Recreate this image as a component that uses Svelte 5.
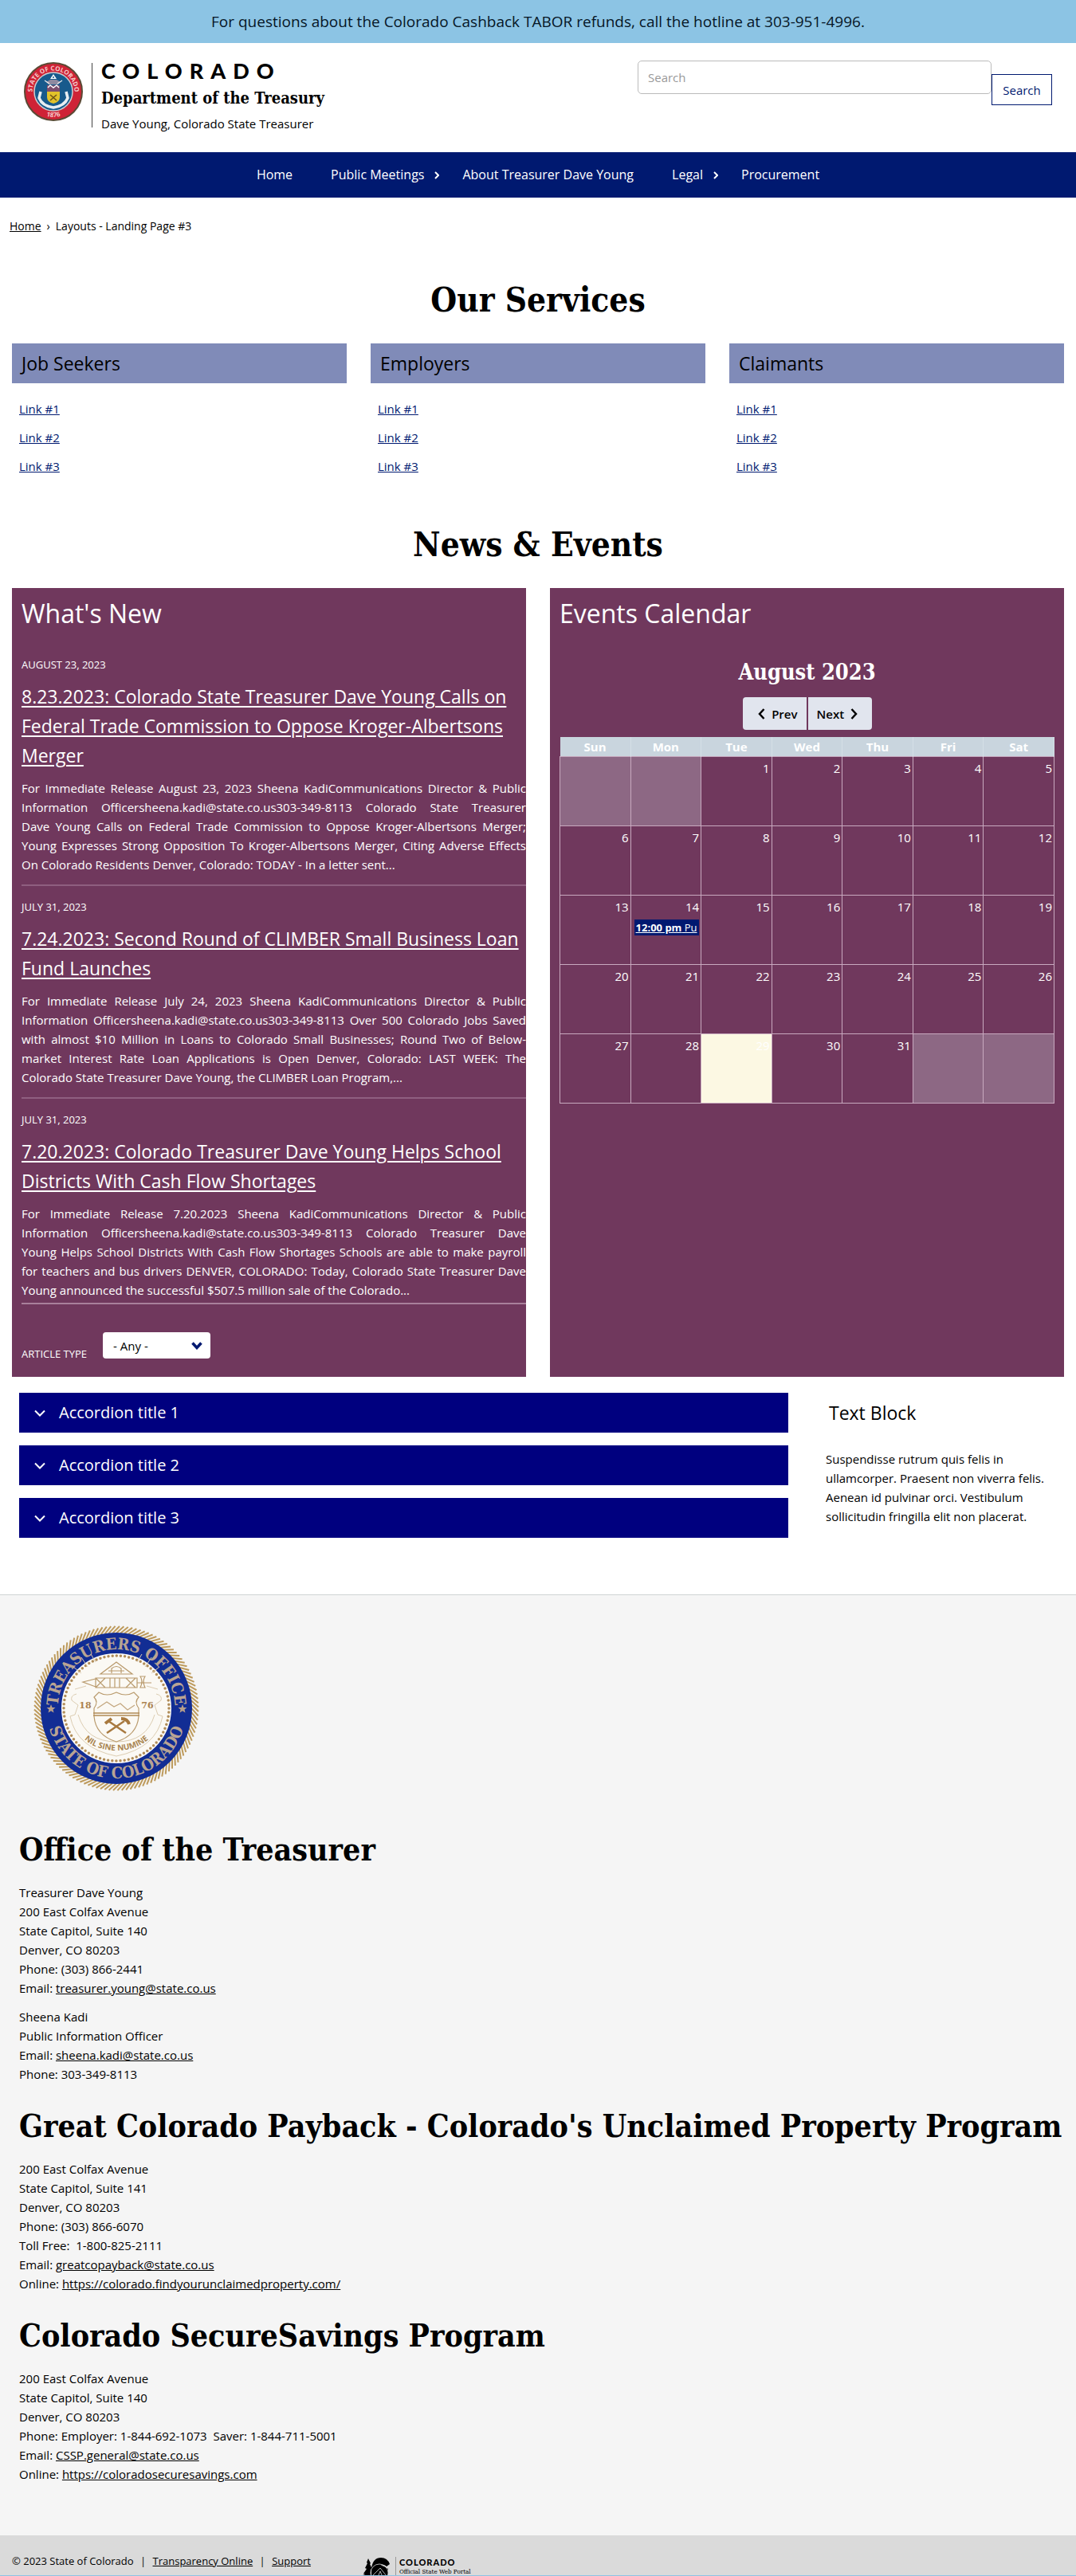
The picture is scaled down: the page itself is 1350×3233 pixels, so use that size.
<script>
  const services = ['Job Seekers', 'Employers', 'Claimants'];
  const links = ['Link #1', 'Link #2', 'Link #3'];

  const articles = [
    {
      date: 'August 23, 2023',
      title: '8.23.2023: Colorado State Treasurer Dave Young Calls on Federal Trade Commission to Oppose Kroger-Albertsons Merger',
      text: 'For Immediate Release August 23, 2023 Sheena KadiCommunications Director & Public Information Officersheena.kadi@state.co.us303-349-8113 Colorado State Treasurer Dave\u00a0Young Calls on Federal Trade Commission to Oppose Kroger-Albertsons Merger; Young Expresses Strong Opposition To Kroger-Albertsons Merger, Citing Adverse Effects On Colorado Residents Denver, Colorado: TODAY - In a letter sent...'
    },
    {
      date: 'July 31, 2023',
      title: '7.24.2023: Second Round of CLIMBER Small Business Loan Fund Launches',
      text: 'For Immediate Release July 24, 2023 Sheena KadiCommunications Director & Public Information Officersheena.kadi@state.co.us303-349-8113 Over 500 Colorado Jobs Saved with almost $10 Million in Loans to Colorado Small Businesses; Round Two of Below-market Interest Rate Loan Applications is Open Denver, Colorado: LAST WEEK: The Colorado State Treasurer Dave Young, the CLIMBER Loan Program,...'
    },
    {
      date: 'July 31, 2023',
      title: '7.20.2023: Colorado Treasurer Dave Young Helps School Districts With Cash Flow Shortages',
      text: 'For Immediate Release 7.20.2023 Sheena KadiCommunications Director & Public Information Officersheena.kadi@state.co.us303-349-8113 Colorado Treasurer Dave Young\u00a0Helps School Districts With Cash Flow Shortages Schools are able to make payroll for teachers and bus drivers DENVER, COLORADO: Today, Colorado State Treasurer Dave Young announced the successful $507.5 million sale of the Colorado...'
    }
  ];

  const days = ['Sun', 'Mon', 'Tue', 'Wed', 'Thu', 'Fri', 'Sat'];
  const firstWeekday = 2;
  const today = 29;
  const weeks = Array.from({ length: 5 }, (_, w) =>
    Array.from({ length: 7 }, (_, d) => {
      const n = w * 7 + d - firstWeekday + 1;
      return n >= 1 && n <= 31 ? n : null;
    })
  );

  const accordions = ['Accordion title 1', 'Accordion title 2', 'Accordion title 3'];
  let open = $state(-1);

  const rope = Array.from({ length: 120 }, (_, i) => i * 3);
</script>

<p class="banner">For questions about the Colorado Cashback TABOR refunds, call the hotline at 303-951-4996.</p>

<header>
  <a class="brand" href="#home">
    <svg class="state-seal" viewBox="0 0 74 74" aria-hidden="true">
      <defs>
        <path id="state-top" d="M12.1 46.1A26.5 26.5 0 1 1 61.9 46.1" />
        <path id="state-bottom" d="M5 37a32 32 0 0 0 64 0" />
      </defs>
      <circle cx="37" cy="37" r="36" fill="#cf2336" stroke="#5b4a35" stroke-width="2" />
      <circle cx="37" cy="37" r="24" fill="#175a8c" stroke="#c9cdd0" stroke-width="1.5" />
      <text class="state-text"><textPath href="#state-top" startOffset="50%" text-anchor="middle">STATE OF COLORADO</textPath></text>
      <text class="state-text"><textPath href="#state-bottom" startOffset="50%" text-anchor="middle">1876</textPath></text>
      <path d="M37 15l-4 6h8z" fill="#fff" />
      <circle cx="37" cy="19" r="1" fill="#175a8c" />
      <path d="M28 25l5-3h8l5 3-3 3H31z" fill="#8e8aa0" />
      <path d="M26 23l6 4M48 23l-6 4" stroke="#eee" stroke-width="1.2" />
      <path d="M29 29h16v8H29z" fill="#7c4e6d" />
      <path d="M30 32l3-3 4 3 4-3 3 3" fill="none" stroke="#fff" stroke-width="1.4" />
      <path d="M29 37h16v7q0 6-8 8q-8-2-8-8z" fill="#e2c22a" />
      <path d="M33 41l8 7M41 41l-8 7" stroke="#6e5418" stroke-width="1.6" />
      <path d="M21 37l-2 8q4 10 18 12q14-2 18-12l-2-8" fill="none" stroke="#e8eef2" stroke-width="3.5" />
    </svg>
    <span class="wordmark">
      <span class="colorado">COLORADO</span>
      <span class="dept">Department of the Treasury</span>
      <span class="officer">Dave Young, Colorado State Treasurer</span>
    </span>
  </a>
  <form class="search" role="search" onsubmit={(e) => e.preventDefault()}>
    <input type="search" placeholder="Search" aria-label="Search" />
    <button type="submit">Search</button>
  </form>
</header>

{#snippet chevron()}
  <svg class="nav-arrow" viewBox="0 0 6 10" aria-hidden="true"><path d="M1 1l4 4-4 4" /></svg>
{/snippet}

<nav class="main-nav" aria-label="Main">
  <a href="#home">Home</a>
  <a href="#meetings">Public Meetings{@render chevron()}</a>
  <a href="#about">About Treasurer Dave Young</a>
  <a href="#legal">Legal{@render chevron()}</a>
  <a href="#procurement">Procurement</a>
</nav>

<nav class="breadcrumb" aria-label="Breadcrumb">
  <a href="#home">Home</a><span>›</span><span>Layouts - Landing Page #3</span>
</nav>

<main>
  <h2>Our Services</h2>
  <div class="services">
    {#each services as name}
      <section>
        <h3>{name}</h3>
        <ul>
          {#each links as link}<li><a href="#link">{link}</a></li>{/each}
        </ul>
      </section>
    {/each}
  </div>

  <h2>News &amp; Events</h2>
  <div class="panels">
    <section class="panel news">
      <h3>What's New</h3>
      {#each articles as a}
        <article>
          <p class="date">{a.date}</p>
          <h4><a href="#article">{a.title}</a></h4>
          <p class="excerpt">{a.text}</p>
        </article>
      {/each}
      <div class="filter">
        <label for="article-type">Article Type</label>
        <span class="select-wrap">
          <select id="article-type"><option>- Any -</option></select>
          <svg viewBox="0 0 14 10" aria-hidden="true"><path d="M1.5 1.5L7 7.5l5.5-6" /></svg>
        </span>
      </div>
    </section>

    <section class="panel events">
      <h3>Events Calendar</h3>
      <p class="month">August 2023</p>
      <div class="pager">
        <button type="button"><svg viewBox="0 0 9 14" aria-hidden="true"><path d="M7.5 1L2 7l5.5 6" /></svg>Prev</button>
        <button type="button">Next<svg viewBox="0 0 9 14" aria-hidden="true"><path d="M1.5 1L7 7l-5.5 6" /></svg></button>
      </div>
      <table>
        <thead>
          <tr>{#each days as d}<th scope="col">{d}</th>{/each}</tr>
        </thead>
        <tbody>
          {#each weeks as week}
            <tr>
              {#each week as n}
                <td class:other={n === null} class:today={n === today}>
                  {n ?? ''}
                  {#if n === 14}<a class="event" href="#event"><b>12:00 pm</b> Pu</a>{/if}
                </td>
              {/each}
            </tr>
          {/each}
        </tbody>
      </table>
    </section>
  </div>

  <div class="lower">
    <div class="accordions">
      {#each accordions as title, i}
        <button type="button" aria-expanded={open === i} onclick={() => (open = open === i ? -1 : i)}>
          <svg viewBox="0 0 14 9" aria-hidden="true"><path d="M1 1.5l6 6 6-6" /></svg>{title}
        </button>
      {/each}
    </div>
    <section class="text-block">
      <h3>Text Block</h3>
      <p>Suspendisse rutrum quis felis in ullamcorper. Praesent non viverra felis. Aenean id pulvinar orci. Vestibulum sollicitudin fringilla elit non placerat.</p>
    </section>
  </div>
</main>

<footer>
  <svg class="office-seal" viewBox="0 0 208 208" role="img" aria-label="Treasurers Office, State of Colorado">
    <defs>
      <path id="ring-top" d="M31 110A73.3 73.3 0 1 1 177 110" />
      <path id="ring-bottom" d="M16 104a88 88 0 0 0 176 0" />
      <path id="motto" d="M55 133Q72 157 104 157T153 133" />
    </defs>
    <circle cx="104" cy="104" r="96" fill="#fbfaf6" />
    <g stroke="#bd9a5c" stroke-width="2">
      {#each rope as angle}<path d="M99 10l9-9" transform={`rotate(${angle} 104 104)`} />{/each}
    </g>
    <circle cx="104" cy="104" r="82" fill="none" stroke="#122d94" stroke-width="26" />
    <circle cx="104" cy="104" r="66" fill="#fbf9f4" stroke="#b08c58" stroke-width="3.5" stroke-dasharray="0 5.18" stroke-linecap="round" />
    <text class="ring-text"><textPath href="#ring-top" startOffset="50%" text-anchor="middle">TREASURERS OFFICE</textPath></text>
    <text class="ring-text"><textPath href="#ring-bottom" startOffset="50%" text-anchor="middle">STATE OF COLORADO</textPath></text>
    <g fill="#b79f8b">
      <path id="star" d="M22 99l1.5 4h4l-3 2.5 1 4-3.5-2.3-3.5 2.3 1-4-3-2.5h4z" />
      <use href="#star" x="165" />
    </g>
    <g fill="none" stroke="#dccdb2" stroke-width="1">
      <path d="M60 60l-10-8M68 52l-8-12M148 60l10-8M140 52l8-12M52 80l14-4M156 80l-14-4M78 46l-6-10M130 46l6-10" />
      <path d="M54 86q-8 2-6 8l8 6-4 12-6 2q8 40 58 50q50-10 58-50l-6-2-4-12 8-6q2-6-6-8" />
      <path d="M56 112q10 34 48 34t48-34" />
    </g>
    <g fill="none" stroke="#b99a6c" stroke-width="1.2">
      <path d="M104 46L84 61h40zM98 60v-6q6-5 12 0v6M94 57h20" />
      <path d="M62 71l16-4v10zM78 66h52v12H78zM78 66l12 12M90 66l-12 12M116 66l12 12M128 66l-12 12M96 66v12M102 66v12M108 66v12M134 64q4 6 0 14h6q-4-8 0-14zM130 72h18" />
      <path d="M82 84q10 6 22 0q12 6 22 0l6 6q-6 6 0 14v10q-2 24-28 32q-26-8-28-32v-10q6-8 0-14z" fill="#fbf9f4" />
      <path d="M80 104l12-8 9 6 8-4 9 8 9-6" stroke="#c3a67d" />
    </g>
    <path d="M75 110h58M75 113h58" stroke="#b18a56" stroke-width="1.5" />
    <path d="M94 120l22 15M114 120l-22 15" stroke="#a8793f" stroke-width="2.5" />
    <path d="M90 123l8-6M110 117q8 0 10 7" fill="none" stroke="#a8793f" stroke-width="4" />
    <text class="year" x="65" y="104" text-anchor="middle">18</text>
    <text class="year" x="143" y="104" text-anchor="middle">76</text>
    <text class="motto"><textPath href="#motto" startOffset="50%" text-anchor="middle">NIL SINE NUMINE</textPath></text>
  </svg>

  <h2>Office of the Treasurer</h2>
  <address>
    Treasurer Dave Young<br />200 East Colfax Avenue<br />State Capitol, Suite 140<br />Denver, CO 80203<br />Phone: (303) 866-2441<br />Email: <a href="#mail">treasurer.young@state.co.us</a>
  </address>
  <address>
    Sheena Kadi<br />Public Information Officer<br />Email: <a href="#mail">sheena.kadi@state.co.us</a><br />Phone: 303-349-8113
  </address>

  <h2>Great Colorado Payback - Colorado's Unclaimed Property Program</h2>
  <address>
    200 East Colfax Avenue<br />State Capitol, Suite 141<br />Denver, CO 80203<br />Phone: (303) 866-6070<br />Toll Free: &nbsp;1-800-825-2111<br />Email: <a href="#mail">greatcopayback@state.co.us</a><br />Online: <a href="#site">https://colorado.findyourunclaimedproperty.com/</a>
  </address>

  <h2>Colorado SecureSavings Program</h2>
  <address>
    200 East Colfax Avenue<br />State Capitol, Suite 140<br />Denver, CO 80203<br />Phone: Employer: 1-844-692-1073 &nbsp;Saver: 1-844-711-5001<br />Email: <a href="#mail">CSSP.general@state.co.us</a><br />Online: <a href="#site">https://coloradosecuresavings.com</a>
  </address>
</footer>

<div class="legal">
  <p>© 2023 State of Colorado <span>|</span> <a href="#transparency">Transparency Online</a> <span>|</span> <a href="#support">Support</a></p>
  <a class="portal" href="#portal">
    <svg viewBox="0 0 36 36" aria-hidden="true">
      <path d="M7 2l3 6-1 1 3 6-2 1v20H0V23l3-1-2-1 4-6-2-1 3-6-1-1z" />
      <path d="M34 9L30 12q-4-4-9 0l-6 9v15h-4V14Q13 1 23 1q8 0 11 8z" />
      <path d="M12 16q6-8 15-4l5 3v12q-6 9-15 9h-5z" />
      <g fill="none" stroke="#ddd" stroke-width="0.8"><circle cx="21" cy="20" r="11" /><path d="M12 24l10-10 8 10M17 30l5-12 5 12" /></g>
    </svg>
    <span><b>COLORADO</b>Official State Web Portal</span>
  </a>
</div>

<style>
  :global(body) {
    margin: 0;
    background: #fff;
    color: #000;
    font: 15px/24px "Open Sans", "Noto Sans", sans-serif;
  }
  h2, h3, h4, p, ul { margin: 0; padding: 0; font-weight: 400; }
  button, input, select { font: inherit; }

  .banner {
    background: #8cc4e4;
    color: #061626;
    font-size: 19px;
    line-height: 54px;
    text-align: center;
  }

  header {
    display: flex;
    justify-content: space-between;
    align-items: flex-start;
    padding: 20px 30px 31px;
  }
  .brand { display: flex; align-items: flex-start; color: #000; text-decoration: none; }
  .state-seal { width: 74px; height: 74px; margin-top: 4px; }
  .state-text { font: bold 8px "Open Sans", sans-serif; fill: #f5c9c9; }
  .wordmark {
    display: flex;
    flex-direction: column;
    gap: 2px;
    margin-left: 11px;
    padding-left: 11px;
    border-left: 1px solid #444;
    height: 81px;
    margin-top: 5px;
  }
  .colorado { font: 900 27px/20px Lato, sans-serif; letter-spacing: 9px; }
  .dept { font: bold 20px/32px "DejaVu Serif Condensed", "DejaVu Serif", serif; margin-top: 6px; }
  .officer { line-height: 28px; }

  .search { display: flex; align-items: flex-start; }
  .search input {
    box-sizing: border-box;
    width: 444px;
    height: 42px;
    margin-top: 2px;
    padding: 0 12px;
    border: 1px solid #bbb;
    border-radius: 5px;
    color: #333;
  }
  .search input::placeholder { color: #999; }
  .search button {
    width: 76px;
    height: 39px;
    margin-top: 19px;
    padding: 0;
    border: 1px solid #001970;
    background: #fff;
    color: #001970;
  }

  .main-nav {
    display: flex;
    justify-content: center;
    background: #001970;
    font-size: 16px;
    line-height: 57px;
  }
  .main-nav a { position: relative; padding: 0 24px; color: #fff; text-decoration: none; }
  .nav-arrow { position: absolute; right: 5px; top: 24px; width: 6px; height: 10px; }
  .nav-arrow path { fill: none; stroke: #fff; stroke-width: 2; }

  .breadcrumb { display: flex; gap: 7px; padding: 24px 12px 0; font-size: 14px; }
  .breadcrumb a { color: #000; }

  h2 { font: bold 42px/48px "DejaVu Serif Condensed", "DejaVu Serif", serif; }
  main h2 { text-align: center; padding: 57px 0 30px; }

  .services { display: grid; grid-template-columns: repeat(3, 1fr); gap: 30px; padding: 0 15px; }
  .services h3 { padding-left: 12px; background: #808bb8; font-size: 23px; line-height: 50px; }
  .services ul { list-style: none; padding: 14px 9px 0; line-height: 36px; }
  .services a { color: #001970; }

  .panels { display: grid; grid-template-columns: 1fr 1fr; gap: 30px; padding: 0 15px; }
  .panel { background: #70385d; color: #fff; padding: 8px 0 23px 12px; min-width: 0; }
  .panel a { color: #fff; }
  .panel h3 { font-size: 32px; line-height: 48px; }

  article { padding: 14px 0 13px; border-bottom: 2px solid #8f5f80; }
  h3 + article { padding-top: 28px; }
  article:last-of-type { padding-bottom: 4px; border-color: #a8809b; }
  .date, .filter { font-size: 13px; text-transform: uppercase; }
  h4 { margin: 10px 0; font-size: 23px; line-height: 37px; }
  h4 a { text-decoration-thickness: 2px; text-underline-offset: 3px; }
  .excerpt { text-align: justify; }

  .filter { display: flex; align-items: flex-end; gap: 20px; margin-top: 35px; }
  .filter label { line-height: 12px; }
  .select-wrap { position: relative; }
  .select-wrap select {
    appearance: none;
    display: block;
    width: 135px;
    height: 33px;
    padding: 0 13px;
    border: 0;
    border-radius: 4px;
    background: #fff;
    color: #000;
    font-size: 15px;
  }
  .select-wrap svg { position: absolute; right: 10px; top: 12px; width: 14px; height: 10px; }
  .select-wrap path { fill: none; stroke: #001970; stroke-width: 3.5; }

  .events { padding-right: 12px; }
  .month { margin-top: 32px; text-align: center; font: bold 27px/36px "DejaVu Serif Condensed", "DejaVu Serif", serif; }
  .pager { display: flex; justify-content: center; gap: 2px; margin: 13px 0 9px; }
  .pager button {
    display: flex;
    align-items: center;
    gap: 8px;
    width: 80px;
    height: 41px;
    padding: 0 11px;
    border: 0;
    background: #e1e5ee;
    color: #000;
    font-weight: 600;
  }
  .pager button:first-child { justify-content: flex-end; border-radius: 4px 0 0 4px; }
  .pager button:last-child { justify-content: flex-start; border-radius: 0 4px 4px 0; }
  .pager svg { width: 9px; height: 14px; }
  .pager path { fill: none; stroke: #000; stroke-width: 2.5; }

  table { width: 100%; table-layout: fixed; border-collapse: collapse; }
  th { padding: 0; height: 24px; background: #c9d5de; border-right: 1px solid #d5dfe6; line-height: 24px; }
  td {
    height: 84px;
    padding: 2px 2px 0;
    border: 1px solid #c8a9bf;
    text-align: right;
    vertical-align: top;
  }
  td.other { background: #8d6884; }
  td.today { background: #fcf8e3; color: #fff; }
  .event {
    display: block;
    margin: 4px 0 0 2px;
    padding-left: 2px;
    background: #001970;
    font-size: 13px;
    line-height: 20px;
    text-align: left;
    white-space: nowrap;
    overflow: hidden;
  }

  .lower { display: grid; grid-template-columns: minmax(0, 965fr) minmax(0, 302fr); gap: 35px; padding: 20px 24px 71px; }
  .accordions { display: grid; align-content: start; gap: 16px; }
  .accordions button {
    display: flex;
    align-items: center;
    gap: 17px;
    height: 50px;
    padding: 0 19px;
    border: 0;
    background: #00007f;
    color: #fff;
    font-size: 20px;
    text-align: left;
  }
  .accordions svg { width: 14px; height: 9px; }
  .accordions path { fill: none; stroke: #fff; stroke-width: 2; }
  .text-block { padding: 0 0 0 12px; }
  .text-block h3 { padding-left: 4px; font-size: 23px; line-height: 50px; }
  .text-block p { margin-top: 21px; }

  footer { padding: 38px 0 65px 24px; border-top: 1px solid #d0d4d4; background: #f5f5f5; }
  footer h2 { margin: 29px 0 18px; font-size: 39px; }
  footer a { color: #000; }
  address { font-style: normal; }
  address + address { margin-top: 12px; }
  .office-seal { display: block; width: 208px; height: 208px; margin: 0 0 49px 18px; }
  .ring-text { font: bold 20px "DejaVu Serif Condensed", serif; fill: #b9a493; }
  .year { font: bold 11px "DejaVu Serif", serif; fill: #ab8350; }
  .motto { font: bold 10px "Open Sans", sans-serif; fill: #a8844f; }

  .legal {
    display: flex;
    align-items: flex-start;
    gap: 65px;
    box-sizing: border-box;
    height: 51px;
    overflow: hidden;
    padding: 20px 15px 0;
    border-bottom: 1px solid #8cc4e4;
    background: #dadada;
    font-size: 13px;
  }
  .legal a { color: #000; }
  .legal p span { margin: 0 5px; }
  .legal .portal { display: flex; gap: 5px; margin-top: 7px; text-decoration: none; }
  .portal svg { width: 36px; height: 36px; }
  .portal span { display: block; padding-left: 4px; border-left: 1px solid #999; font: 8px/10px "DejaVu Serif Condensed", serif; }
  .portal b { display: block; font: 900 11px/14px Lato, sans-serif; letter-spacing: 1px; }
</style>
